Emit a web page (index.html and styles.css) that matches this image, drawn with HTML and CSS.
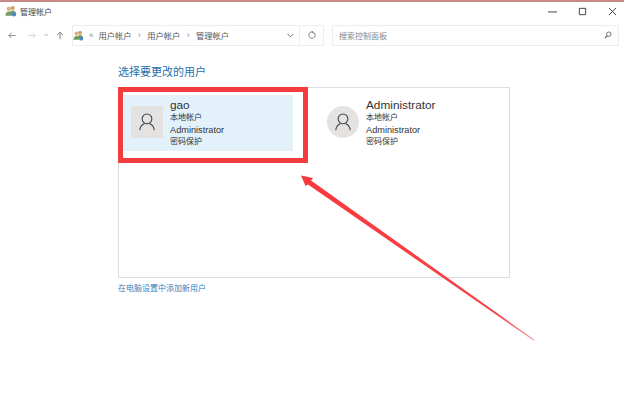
FILE: index.html
```html
<!DOCTYPE html>
<html lang="zh-CN">
<head>
    <meta charset="UTF-8">
    <title>管理帐户</title>
    <link rel="stylesheet" href="styles.css">
</head>
<body>
    <div class="window">
        <div class="titlebar">
            <div class="title">
                <svg class="users-icon" viewBox="0 0 14 14">
                    <circle cx="9" cy="3.5" r="2.4" fill="#c9a36a"/>
                    <path d="M5 11c0-3 2-4.500 4-4.500s4 1.500 4 4.500z" fill="#7a9a5c"/>
                    <circle cx="4.500" cy="4.500" r="2.600" fill="#d8b27a"/>
                    <path d="M0.500 12.500c0-3.500 2-5 4-5s4 1.500 4 5z" fill="#6f9c63"/>
                    <circle cx="10.500" cy="11" r="2.500" fill="#4a86c8"/>
                </svg>
                <span>管理帐户</span>
            </div>
            <div class="window-buttons">
                <svg viewBox="0 0 10 10"><path d="M0 5.500h10" stroke="#333" fill="none"/></svg>
                <svg viewBox="0 0 10 10"><path d="M1.500 1.500h7v7h-7z" stroke="#333" fill="none"/></svg>
                <svg viewBox="0 0 10 10"><path d="M1 1l8 8M9 1l-8 8" stroke="#333" fill="none"/></svg>
            </div>
        </div>

        <div class="toolbar">
            <div class="nav-buttons">
                <svg class="nav-icon back" viewBox="0 0 10 10"><path d="M9.500 5h-8.500M4.500 1.500l-3.500 3.500 3.500 3.500" stroke="#777" fill="none"/></svg>
                <svg class="nav-icon" viewBox="0 0 10 10"><path d="M0.500 5h8.500M5.500 1.500l3.500 3.500-3.500 3.500" stroke="#ccc" fill="none"/></svg>
                <svg class="nav-small" viewBox="0 0 6 4"><path d="M0.500 0.500l2.500 2.500 2.500-2.500" stroke="#999" fill="none"/></svg>
                <svg class="nav-icon" viewBox="0 0 10 10"><path d="M5 9.500v-8.500M1.500 4.500l3.500-3.500 3.500 3.500" stroke="#666" fill="none"/></svg>
            </div>
            <div class="address">
                <svg class="users-icon small" viewBox="0 0 14 14">
                    <circle cx="9" cy="3.5" r="2.4" fill="#c9a36a"/>
                    <path d="M5 11c0-3 2-4.500 4-4.500s4 1.500 4 4.500z" fill="#7a9a5c"/>
                    <circle cx="4.500" cy="4.500" r="2.600" fill="#d8b27a"/>
                    <path d="M0.500 12.500c0-3.500 2-5 4-5s4 1.500 4 5z" fill="#6f9c63"/>
                    <circle cx="10.500" cy="11" r="2.500" fill="#4a86c8"/>
                </svg>
                <span class="crumb-sep first">«</span>
                <span>用户帐户</span>
                <span class="crumb-sep">›</span>
                <span>用户帐户</span>
                <span class="crumb-sep">›</span>
                <span>管理帐户</span>
                <svg class="address-arrow" viewBox="0 0 8 5"><path d="M0.500 0.500l3.500 3.500 3.500-3.500" stroke="#666" fill="none"/></svg>
            </div>
            <div class="refresh">
                <svg viewBox="0 0 10 10"><path d="M7.800 2.200a4 4 0 1 1-2.300-1.100M5.500 0v2.400h2.300" stroke="#666" fill="none"/></svg>
            </div>
            <div class="search">
                <span>搜索控制面板</span>
                <svg viewBox="0 0 10 10"><circle cx="6" cy="4" r="2.800" stroke="#555" fill="none"/><path d="M4 6l-3 3" stroke="#555" stroke-width="1.400"/></svg>
            </div>
        </div>

        <div class="content">
            <h2 class="heading">选择要更改的用户</h2>
            <div class="panel">
                <div class="user-card selected">
                    <div class="avatar square">
                        <svg viewBox="0 0 20 20"><circle cx="10" cy="6.500" r="5.400" stroke="#444" stroke-width="1.200" fill="none"/><path d="M2 19c0.300-3.500 2.400-6 5-7M18 19c-0.300-3.500-2.400-6-5-7" stroke="#444" stroke-width="1.200" fill="none"/></svg>
                    </div>
                    <div class="user-info">
                        <div class="user-name">gao</div>
                        <div>本地帐户</div>
                        <div class="latin">Administrator</div>
                        <div>密码保护</div>
                    </div>
                </div>
                <div class="user-card">
                    <div class="avatar round">
                        <svg viewBox="0 0 20 20"><circle cx="10" cy="6.500" r="5.400" stroke="#444" stroke-width="1.200" fill="none"/><path d="M2 19c0.300-3.500 2.400-6 5-7M18 19c-0.300-3.500-2.400-6-5-7" stroke="#444" stroke-width="1.200" fill="none"/></svg>
                    </div>
                    <div class="user-info">
                        <div class="user-name">Administrator</div>
                        <div>本地帐户</div>
                        <div class="latin">Administrator</div>
                        <div>密码保护</div>
                    </div>
                </div>
                <div class="red-box"></div>
            </div>
            <a class="add-user">在电脑设置中添加新用户</a>
        </div>

        <svg class="arrow" viewBox="0 0 624 416">
            <defs>
                <linearGradient id="tail" gradientUnits="userSpaceOnUse" x1="301" y1="176" x2="534" y2="340">
                    <stop offset="0" stop-color="#fa383c"/>
                    <stop offset="0.850" stop-color="#f6444a"/>
                    <stop offset="1" stop-color="#f6a4aa"/>
                </linearGradient>
            </defs>
            <path d="M301 175.500L313 178L311 180.500L534.500 339.800L533.800 340.800L308 184.500L305.500 186z" fill="url(#tail)"/>
        </svg>
    </div>
</body>
</html>
```

FILE: styles.css
```css
* {
    margin: 0;
    padding: 0;
    box-sizing: border-box;
    font-family: "Liberation Sans", "Noto Sans CJK SC", sans-serif;
}

body {
    background-color: white;
    width: 624px;
    height: 416px;
    overflow: hidden;
}

.window {
    position: relative;
    height: 416px;
    border-top: 2px solid #c98a86;
    color: #333;
}

.titlebar {
    display: flex;
    justify-content: space-between;
    align-items: center;
    height: 18px;
    padding: 0 7px 0 5px;
}

.title {
    display: flex;
    align-items: center;
    gap: 3px;
    font-size: 8px;
    color: #444;
}

.users-icon {
    width: 12px;
    height: 12px;
}

.users-icon.small {
    width: 11px;
    height: 11px;
}

.window-buttons {
    display: flex;
    gap: 21px;
}

.window-buttons svg {
    width: 9px;
    height: 9px;
}

.toolbar {
    display: flex;
    align-items: center;
    height: 22px;
    margin-top: 4px;
    padding-left: 8px;
}

.nav-buttons {
    display: flex;
    align-items: center;
    width: 64px;
}

.nav-icon {
    width: 9px;
    height: 9px;
    margin-right: 8px;
}

.nav-icon.back {
    margin-right: 12px;
}

.nav-small {
    width: 5px;
    height: 4px;
    margin-right: 7px;
}

.address {
    display: flex;
    align-items: center;
    width: 228px;
    height: 21px;
    border: 1px solid #eee;
    font-size: 8.250px;
    color: #555;
}

.crumb-sep {
    margin: 0 6.500px;
    color: #888;
}

.crumb-sep.first {
    margin: 0 5px;
}

.address-arrow {
    width: 7px;
    height: 5px;
    margin-left: auto;
    margin-right: 5px;
}

.refresh {
    display: flex;
    align-items: center;
    justify-content: center;
    width: 24px;
    height: 21px;
    border: 1px solid #eee;
    border-left: none;
}

.refresh svg {
    width: 8px;
    height: 8px;
}

.search {
    display: flex;
    align-items: center;
    justify-content: space-between;
    width: 287px;
    height: 21px;
    margin-left: 8px;
    padding: 0 6px;
    border: 1px solid #eee;
    font-size: 8px;
    color: #888;
}

.search svg {
    width: 8px;
    height: 8px;
}

.content {
    padding: 19px 0 0 118px;
}

.heading {
    font-size: 11px;
    font-weight: normal;
    line-height: 14px;
    color: #2a6fb0;
    margin-bottom: 8px;
}

.panel {
    position: relative;
    display: grid;
    grid-template-columns: 196px 1fr;
    width: 392px;
    height: 191px;
    padding: 7px 5px;
    border: 1px solid #ddd;
}

.user-card {
    display: flex;
    align-items: flex-start;
    gap: 7px;
    height: 56px;
    padding: 11px 7px 0 7px;
}

.user-card.selected {
    background-color: #e3f1fb;
    width: 169px;
}

.avatar {
    display: flex;
    align-items: center;
    justify-content: center;
    width: 32px;
    height: 32px;
    background-color: #e4e3e2;
    flex-shrink: 0;
}

.avatar svg {
    width: 18px;
    height: 18px;
}

.avatar.round {
    border-radius: 50%;
}

.user-info {
    font-size: 8px;
    line-height: 12px;
    margin-top: -7px;
    color: #333;
}

.user-name {
    font-size: 11.800px;
    line-height: 13px;
}

.latin {
    font-size: 9.200px;
}

.red-box {
    position: absolute;
    left: -1px;
    top: -1px;
    width: 190px;
    height: 76px;
    border: 5px solid #f23c40;
}

.add-user {
    display: block;
    margin-top: 5px;
    font-size: 8px;
    line-height: 12px;
    color: #3a7db8;
}

.arrow {
    position: absolute;
    left: 0;
    top: -2px;
    width: 624px;
    height: 416px;
    pointer-events: none;
}
```
